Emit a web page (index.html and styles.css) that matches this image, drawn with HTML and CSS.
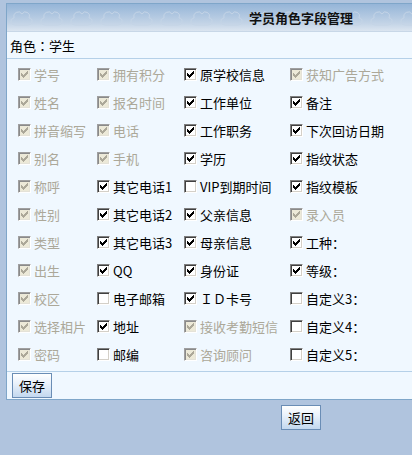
FILE: index.html
```
<!DOCTYPE html>
<html lang="zh-CN">
<head>
<meta charset="utf-8">
<title>学员角色字段管理</title>
<link rel="stylesheet" href="styles.css">
</head>
<body>
<div class="page">
  <div class="panel">
    <div class="head">学员角色字段管理</div>
    <div class="role">角色<span class="colon">：</span>学生</div>
    <div class="fields">
      <label class="f dis"><input class="cb" type="checkbox" checked disabled>学号</label>
      <label class="f dis"><input class="cb" type="checkbox" checked disabled>拥有积分</label>
      <label class="f"><input class="cb" type="checkbox" checked>原学校信息</label>
      <label class="f dis"><input class="cb" type="checkbox" checked disabled>获知广告方式</label>

      <label class="f dis"><input class="cb" type="checkbox" checked disabled>姓名</label>
      <label class="f dis"><input class="cb" type="checkbox" checked disabled>报名时间</label>
      <label class="f"><input class="cb" type="checkbox" checked>工作单位</label>
      <label class="f"><input class="cb" type="checkbox" checked>备注</label>

      <label class="f dis"><input class="cb" type="checkbox" checked disabled>拼音缩写</label>
      <label class="f dis"><input class="cb" type="checkbox" checked disabled>电话</label>
      <label class="f"><input class="cb" type="checkbox" checked>工作职务</label>
      <label class="f"><input class="cb" type="checkbox" checked>下次回访日期</label>

      <label class="f dis"><input class="cb" type="checkbox" checked disabled>别名</label>
      <label class="f dis"><input class="cb" type="checkbox" checked disabled>手机</label>
      <label class="f"><input class="cb" type="checkbox" checked>学历</label>
      <label class="f"><input class="cb" type="checkbox" checked>指纹状态</label>

      <label class="f dis"><input class="cb" type="checkbox" checked disabled>称呼</label>
      <label class="f"><input class="cb" type="checkbox" checked>其它电话1</label>
      <label class="f"><input class="cb" type="checkbox">VIP到期时间</label>
      <label class="f"><input class="cb" type="checkbox" checked>指纹模板</label>

      <label class="f dis"><input class="cb" type="checkbox" checked disabled>性别</label>
      <label class="f"><input class="cb" type="checkbox" checked>其它电话2</label>
      <label class="f"><input class="cb" type="checkbox" checked>父亲信息</label>
      <label class="f dis"><input class="cb" type="checkbox" checked disabled>录入员</label>

      <label class="f dis"><input class="cb" type="checkbox" checked disabled>类型</label>
      <label class="f"><input class="cb" type="checkbox" checked>其它电话3</label>
      <label class="f"><input class="cb" type="checkbox" checked>母亲信息</label>
      <label class="f"><input class="cb" type="checkbox" checked><span>工种<span class="colon">：</span></span></label>

      <label class="f dis"><input class="cb" type="checkbox" checked disabled>出生</label>
      <label class="f"><input class="cb" type="checkbox" checked>QQ</label>
      <label class="f"><input class="cb" type="checkbox" checked>身份证</label>
      <label class="f"><input class="cb" type="checkbox" checked><span>等级<span class="colon">：</span></span></label>

      <label class="f dis"><input class="cb" type="checkbox" checked disabled>校区</label>
      <label class="f"><input class="cb" type="checkbox">电子邮箱</label>
      <label class="f"><input class="cb" type="checkbox" checked>ＩＤ卡号</label>
      <label class="f"><input class="cb" type="checkbox"><span>自定义3<span class="colon">：</span></span></label>

      <label class="f dis"><input class="cb" type="checkbox" checked disabled>选择相片</label>
      <label class="f"><input class="cb" type="checkbox" checked>地址</label>
      <label class="f dis"><input class="cb" type="checkbox" checked disabled>接收考勤短信</label>
      <label class="f"><input class="cb" type="checkbox"><span>自定义4<span class="colon">：</span></span></label>

      <label class="f dis"><input class="cb" type="checkbox" checked disabled>密码</label>
      <label class="f"><input class="cb" type="checkbox">邮编</label>
      <label class="f dis"><input class="cb" type="checkbox" checked disabled>咨询顾问</label>
      <label class="f"><input class="cb" type="checkbox"><span>自定义5<span class="colon">：</span></span></label>
    </div>
    <div class="actions"><button class="btn" type="button">保存</button></div>
  </div>
  <div class="footer"><button class="btn" type="button">返回</button></div>
</div>
</body>
</html>
```

FILE: styles.css
```
html, body {
  margin: 0;
  padding: 0;
  overflow: hidden;
  background: #b0c4de;
}

body {
  font-family: "Noto Sans CJK SC", "Noto Sans", sans-serif;
  font-size: 13px;
  color: #000;
}

.colon {
  font-family: "Noto Sans CJK JP", "Noto Sans CJK SC", sans-serif;
}

.page {
  width: 596px;
  padding: 3px 0 0 6px;
}

.panel {
  width: 590px;
  box-sizing: border-box;
  border: 1px solid #7fa6c9;
  background: #f0f8ff;
}

.head {
  height: 27px;
  line-height: 27px;
  text-align: center;
  font-weight: bold;
  font-size: 13px;
  color: #111;
  border-bottom: 1px solid #c8d7e7;
  background-image:
    url("data:image/svg+xml,%3Csvg xmlns='http://www.w3.org/2000/svg' width='30' height='27'%3E%3Cpath d='M8 21A3.5 3.5 0 0 1 7 14A4.5 4.5 0 0 1 15 10A4 4 0 0 1 22 14A3.5 3.5 0 0 1 21 21Z' fill='none' stroke='%23c4d4e6' stroke-width='1'/%3E%3C/svg%3E"),
    linear-gradient(#95b5d8, #c2d3e6 70%, #dbe5f0);
  background-repeat: repeat-x, no-repeat;
  background-position: 0 0, 0 0;
}

.role {
  height: 26px;
  display: flex;
  align-items: center;
  padding-left: 3px;
  border-bottom: 1px solid #b5d0e8;
}

.fields {
  display: grid;
  grid-template-columns: 79px 87px 106px 1fr;
  grid-auto-rows: 28px;
  padding: 1px 0 3px 11px;
  border-bottom: 1px solid #b5d0e8;
}

.f {
  display: flex;
  align-items: center;
  gap: 3px;
  white-space: nowrap;
}

.f.dis {
  color: #aca899;
}

.cb {
  -webkit-appearance: none;
  appearance: none;
  margin: 0;
  flex: none;
  width: 13px;
  height: 13px;
  box-sizing: border-box;
  border: 1px solid;
  border-color: #808080 #ffffff #ffffff #808080;
  box-shadow: inset 1px 1px #404040, inset -1px -1px #d4d0c8;
  background-color: #ffffff;
  background-repeat: no-repeat;
  background-position: 2px 2px;
}

.cb:checked {
  background-image: url("data:image/svg+xml,%3Csvg xmlns='http://www.w3.org/2000/svg' width='7' height='7' shape-rendering='crispEdges'%3E%3Cpath d='M0 2H1V3H2V4H3V3H4V2H5V1H6V0H7V3H6V4H5V5H4V6H3V7H2V6H1V5H0Z' fill='%23000'/%3E%3C/svg%3E");
}

.cb:disabled {
  background-color: #ece9d8;
  border-color: #a0a0a0 #ffffff #ffffff #a0a0a0;
  box-shadow: inset 1px 1px #8a8a8a, inset -1px -1px #e4e2d8;
}

.cb:disabled:checked {
  background-image: url("data:image/svg+xml,%3Csvg xmlns='http://www.w3.org/2000/svg' width='7' height='7' shape-rendering='crispEdges'%3E%3Cpath d='M0 2H1V3H2V4H3V3H4V2H5V1H6V0H7V3H6V4H5V5H4V6H3V7H2V6H1V5H0Z' fill='%23aca899'/%3E%3C/svg%3E");
}

.actions {
  padding: 1px 0 1px 5px;
}

.btn {
  display: block;
  width: 40px;
  height: 25px;
  box-sizing: border-box;
  margin: 0;
  padding: 0;
  border: 1px solid #6a8db5;
  border-radius: 0;
  background: linear-gradient(#ffffff, #eaf2fb 40%, #c3d8ef);
  font-family: "Noto Sans CJK SC", "Noto Sans", sans-serif;
  font-size: 13px;
  color: #000;
  line-height: 23px;
}

.footer {
  width: 590px;
  padding-top: 5px;
  display: flex;
  justify-content: center;
}
```
